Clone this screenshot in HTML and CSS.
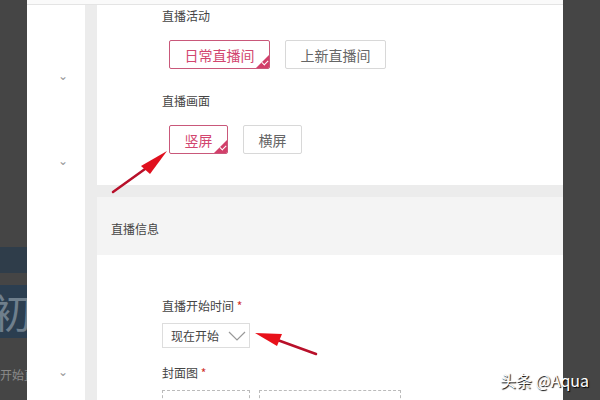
FILE: index.html
```html
<!DOCTYPE html>
<html lang="zh-CN">
<head>
  <meta charset="UTF-8" />
  <title>直播设置</title>
  <link rel="stylesheet" href="styles.css">
</head>
<body>
  <div class="page">
    <div class="backdrop left">
      <div class="bd-band"></div>
      <div class="bd-block"><span>初</span></div>
      <div class="bd-text">开始直</div>
    </div>

    <div class="panel">
      <div class="topbar"></div>
      <div class="panel-body">
        <div class="nav">
          <div class="nav-item">⌄</div>
          <div class="nav-item">⌄</div>
          <div class="nav-item low">⌄</div>
        </div>

        <div class="content">
          <div class="card">
            <div class="field">
              <div class="label">直播活动</div>
              <div class="options">
                <button class="opt selected">日常直播间<i class="tick"></i></button>
                <button class="opt">上新直播间</button>
              </div>
            </div>
            <div class="field">
              <div class="label">直播画面</div>
              <div class="options">
                <button class="opt small selected">竖屏<i class="tick"></i></button>
                <button class="opt small">横屏</button>
              </div>
            </div>
          </div>

          <div class="section">
            <div class="section-head">直播信息</div>
            <div class="section-body">
              <div class="label">直播开始时间 <em>*</em></div>
              <div class="select">现在开始
                <svg width="18" height="10" viewBox="0 0 18 10"><path d="M1 1 L9 9 L17 1" fill="none" stroke="#999" stroke-width="1.2"/></svg>
              </div>
              <div class="label">封面图 <em>*</em></div>
              <div class="uploads">
                <div class="upload"></div>
                <div class="upload wide"></div>
              </div>
            </div>
          </div>
        </div>
      </div>
    </div>

    <div class="backdrop right"></div>

    <svg class="arrows" width="600" height="400" viewBox="0 0 600 400">
      <line x1="113" y1="192" x2="152" y2="164" stroke="#b8102a" stroke-width="2.5" stroke-linecap="round"/>
      <polygon points="167,151 141,166 150,174" fill="#e0101e"/>
      <line x1="316" y1="354" x2="272" y2="338" stroke="#b8102a" stroke-width="2.5" stroke-linecap="round"/>
      <polygon points="255,333 282,334 277,346" fill="#e8101a"/>
    </svg>

    <div class="watermark">头条 @Aqua</div>
  </div>
</body>
</html>
```

FILE: styles.css
```css
body {
  margin: 0;
  font-family: "Noto Sans CJK SC", "Liberation Sans", sans-serif;
  color: #333;
}
.page {
  position: relative;
  display: flex;
  width: 600px;
  height: 400px;
  overflow: hidden;
}
.backdrop {
  background-color: #454545;
  height: 100%;
}
.backdrop.left {
  width: 27px;
  display: flex;
  flex-direction: column;
  padding-top: 247px;
  box-sizing: border-box;
  overflow: hidden;
}
.backdrop.right {
  width: 37px;
}
.bd-band {
  height: 26px;
  background-color: #2f3d4a;
  margin-bottom: 12px;
  flex-shrink: 0;
}
.bd-block {
  height: 53px;
  flex-shrink: 0;
  background-color: #2b3e50;
  color: #6f7f8c;
  font-size: 40px;
  line-height: 53px;
  margin-left: -8px;
}
.bd-text {
  margin-top: 28px;
  font-size: 12px;
  color: #8a8a8a;
  white-space: nowrap;
}
.panel {
  width: 536px;
  display: flex;
  flex-direction: column;
  background-color: #fff;
  overflow: hidden;
}
.topbar {
  height: 4px;
  flex-shrink: 0;
  border-bottom: 1px solid #e4e4e4;
  background-color: #fafafa;
}
.panel-body {
  flex: 1;
  display: flex;
  min-height: 0;
}
.nav {
  width: 58px;
  display: flex;
  flex-direction: column;
  align-items: center;
  padding-left: 14px;
  box-sizing: border-box;
}
.nav-item {
  color: #999;
  font-size: 12px;
  line-height: 12px;
  margin-top: 64px;
}
.nav-item + .nav-item {
  margin-top: 73px;
}
.nav-item.low {
  margin-top: 199px;
}
.content {
  flex: 1;
  background-color: #ececec;
  padding-left: 12px;
  display: flex;
  flex-direction: column;
  gap: 12px;
  min-height: 0;
}
.card {
  background-color: #fff;
  height: 180px;
  flex-shrink: 0;
  padding: 3px 0 0 65px;
  box-sizing: border-box;
}
.label {
  font-size: 12px;
  line-height: 16px;
  color: #444;
}
.label em {
  font-style: normal;
  color: #d0342c;
}
.field + .field {
  margin-top: 24px;
}
.options {
  display: flex;
  gap: 15px;
  margin: 16px 0 0 7px;
}
.opt {
  position: relative;
  width: 101px;
  height: 29px;
  border: 1px solid #d8d8d8;
  border-radius: 2px;
  background-color: #fff;
  font-family: inherit;
  font-size: 14px;
  color: #666;
  padding: 0;
  overflow: hidden;
}
.opt.small {
  width: 59px;
}
.opt.selected {
  border-color: #c9587a;
  color: #d2466f;
}
.tick {
  position: absolute;
  right: 0;
  bottom: 0;
  width: 0;
  height: 0;
  border-left: 13px solid transparent;
  border-bottom: 13px solid #d23f6a;
}
.tick::after {
  content: "";
  position: absolute;
  left: -7px;
  top: 5px;
  width: 5px;
  height: 3px;
  border-left: 1px solid #fff;
  border-bottom: 1px solid #fff;
  transform: rotate(-45deg);
}
.section {
  flex: 1;
  display: flex;
  flex-direction: column;
  min-height: 0;
}
.section-head {
  height: 58px;
  flex-shrink: 0;
  box-sizing: border-box;
  background-color: #f4f4f4;
  font-size: 12px;
  line-height: 56px;
  padding: 4px 0 0 14px;
  color: #444;
}
.section-body {
  flex: 1;
  background-color: #fff;
  padding: 43px 0 0 65px;
  min-height: 0;
}
.select {
  width: 88px;
  height: 25px;
  margin: 9px 0 17px;
  border: 1px solid #ddd;
  box-sizing: border-box;
  display: flex;
  align-items: center;
  justify-content: space-between;
  padding: 0 3px 0 8px;
  font-size: 12px;
  color: #444;
}
.uploads {
  display: flex;
  gap: 9px;
  margin-top: 9px;
}
.upload {
  width: 88px;
  height: 60px;
  flex-shrink: 0;
  border: 1px dashed #bbb;
  box-sizing: border-box;
}
.upload.wide {
  width: 142px;
}
.arrows {
  position: absolute;
  left: 0;
  top: 0;
  pointer-events: none;
}
.watermark {
  position: absolute;
  left: 500px;
  top: 370px;
  color: #fff;
  font-size: 16px;
  line-height: 20px;
  text-shadow: 1px 1px 1px #000;
}
```
